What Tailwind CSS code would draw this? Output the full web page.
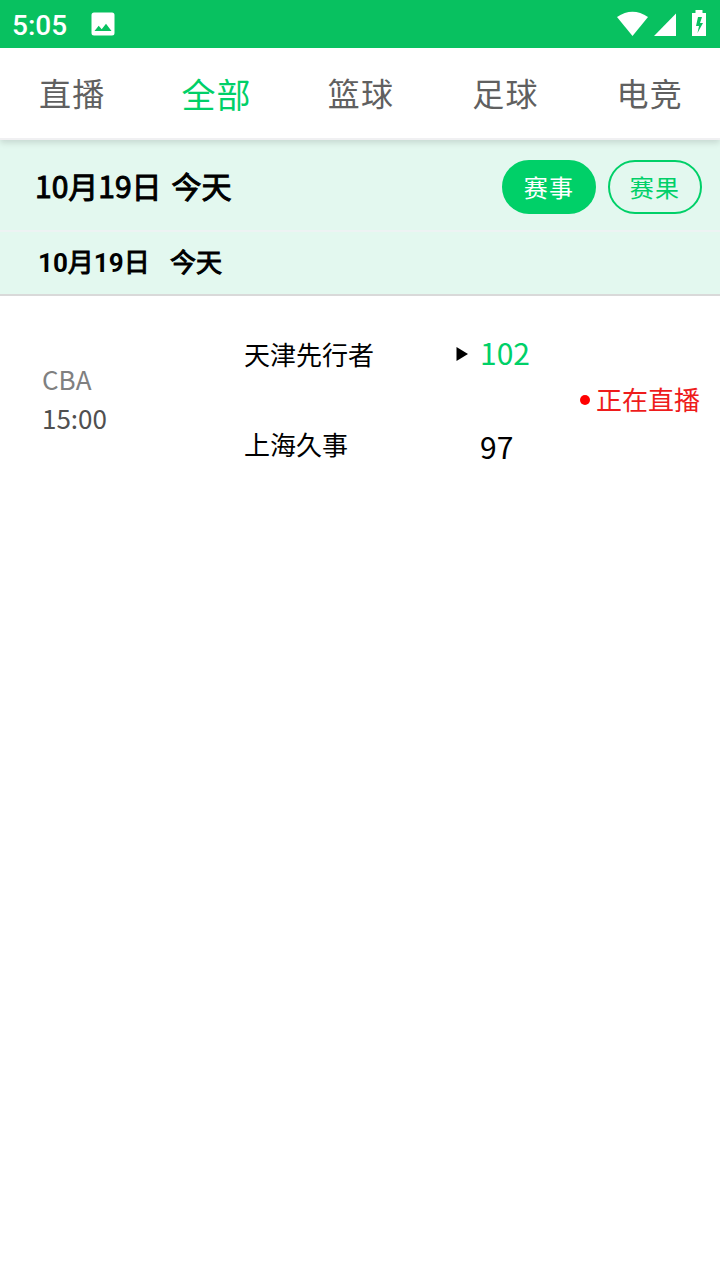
<!DOCTYPE html>
<html lang="zh-CN">
<head>
<meta charset="utf-8">
<title>赛事</title>
<script src="https://cdn.jsdelivr.net/npm/@tailwindcss/browser@4"></script>
</head>
<body class="w-[720px] h-[1280px] overflow-hidden bg-white text-black font-['Noto_Sans_CJK_SC',sans-serif]">
<div class="relative z-10 flex h-12 items-center bg-[#08c160] pl-3 text-white">
  <span class="w-[79px] font-['Roboto',sans-serif] text-[28px] font-medium leading-[48px] pt-[4px]">5:05</span>
  <svg class="mb-px h-6 w-6" viewBox="0 0 24 24" fill="currentColor"><path fill-rule="evenodd" d="M3 .5h18a2.500 2.500 0 0 1 2.500 2.500v18a2.500 2.500 0 0 1-2.500 2.500H3a2.500 2.500 0 0 1-2.500-2.500V3A2.500 2.500 0 0 1 3 .5zM3.500 19h17l-5.500-7.300-4.300 5.600-3-3.500z"/></svg>
  <svg class="ml-auto h-12 w-[108px]" viewBox="0 0 108 48" fill="currentColor">
    <path d="M5 17Q20.500 6.500 36 17L20.500 36z"/>
    <path d="M42 36 64 13.500V36z"/>
    <path fill-rule="evenodd" d="M83.500 10h7v3H94v23H80V13h3.500zM86 17l-2 9h3l-1.500 7 5.500-10h-3l2-6z"/>
  </svg>
</div>
<nav class="relative h-[92px] border-b-2 border-[#f0f0f2] bg-white shadow-[0_3px_6px_rgba(0,0,0,0.12)]">
  <div class="grid w-[722px] grid-cols-5 text-center text-[32px] leading-[88px] tracking-[1.2px] text-[#606060]">
    <span>直播</span><span class="text-[34px] leading-[91px] text-[#00d068]">全部</span><span>篮球</span><span>足球</span><span>电竞</span>
  </div>
</nav>
<div class="flex h-[92px] items-center border-b-2 border-[#edf3f3] bg-[#e3f8ef] pl-[35px] pr-[18px] pt-1">
  <h1 class="flex gap-[10px] pb-[4px] text-[30px] leading-[44px] [-webkit-text-stroke:1px_#000]"><span>10月19日</span><span>今天</span></h1>
  <div class="ml-auto flex gap-3 text-center text-[24px] leading-[50px] tracking-[1.2px]">
    <span class="h-[54px] w-[94px] rounded-full border-2 border-[#00d068] bg-[#00d068] text-white">赛事</span>
    <span class="h-[54px] w-[94px] rounded-full border-2 border-[#00d068] text-[#00d068]">赛果</span>
  </div>
</div>
<div class="flex h-16 gap-5 border-b-2 border-[#d9d9d9] bg-[#e3f8ef] pl-[38px] text-[26px] leading-[58px] [-webkit-text-stroke:1px_#000]">
  <span class="w-[112px] whitespace-nowrap"><b class="font-['Roboto',sans-serif] [-webkit-text-stroke:0]">10</b>月<b class="font-['Roboto',sans-serif] [-webkit-text-stroke:0]">19</b>日</span><span>今天</span>
</div>
<main class="flex h-[208px] items-center">
  <div class="w-[244px] pb-1 pl-[42px] text-[26px] leading-[39px]"><p class="text-[#808080]">CBA</p><p class="text-[#505050]">15:00</p></div>
  <div class="w-[211px] pb-[2px] text-[26px] leading-[90px]"><p>天津先行者</p><p>上海久事</p></div>
  <div class="w-[125px] pb-[2px] text-[30px] leading-[94px]">
    <p class="flex items-center text-[#00d068]"><svg class="mt-[3px] mr-[12px] h-[14px] w-[13px]" viewBox="0 0 13 14"><path d="M1.500 0 13 7 1.500 14z" fill="#000"/></svg>102</p>
    <p class="pl-[25px]">97</p>
  </div>
  <div class="flex items-center gap-[6px] text-[26px] leading-[40px] text-[#ee1c1c]"><i class="h-[10px] w-[10px] rounded-full bg-[#f00]"></i><span class="pb-[2px]">正在直播</span></div>
</main>
</body>
</html>
